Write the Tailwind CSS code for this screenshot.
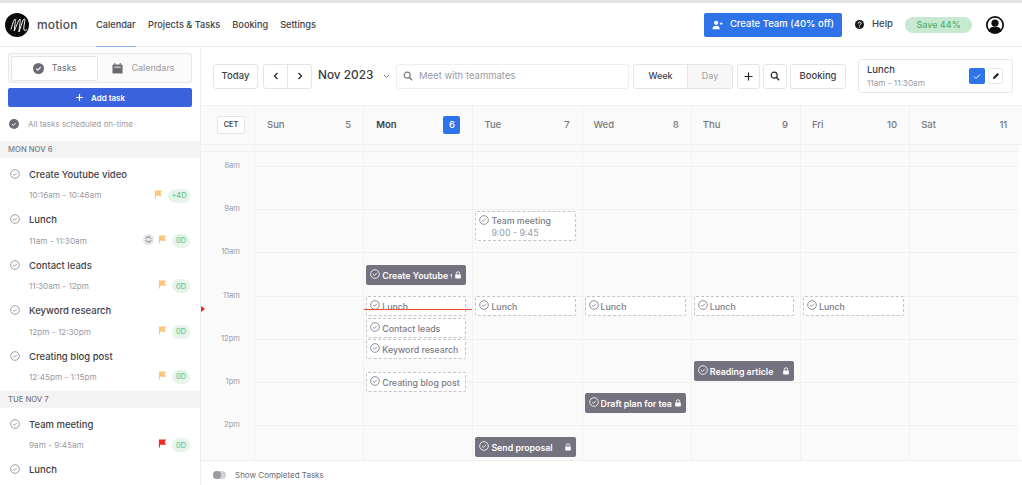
<!DOCTYPE html>
<html lang="en">
<head>
  <meta charset="UTF-8" />
  <title>Motion Calendar</title>
  <script src="https://cdn.jsdelivr.net/npm/@tailwindcss/browser@4"></script>
</head>
<body class="bg-white font-['Inter',sans-serif] text-[#374151] overflow-hidden">
  <svg class="hidden">
    <symbol id="check" viewBox="0 0 12 12"><circle cx="6" cy="6" r="5.2" fill="none" stroke="currentColor" stroke-width="1"/><path d="M3.7 6.2l1.6 1.5 3-3.2" fill="none" stroke="currentColor" stroke-width="1"/></symbol>
    <symbol id="flag" viewBox="0 0 10 10"><path d="M1 0.5h8l-1.6 3 1.6 3H2.2V9.5H1z" fill="currentColor"/></symbol>
    <symbol id="lock" viewBox="0 0 10 10"><path d="M2.8 4.5V3.2a2.2 2.2 0 0 1 4.4 0v1.3" fill="none" stroke="currentColor" stroke-width="1.2"/><rect x="1.5" y="4.3" width="7" height="5" rx="1" fill="currentColor"/></symbol>
    <symbol id="search" viewBox="0 0 12 12"><circle cx="5" cy="5" r="3.6" fill="none" stroke="currentColor" stroke-width="1.4"/><path d="M7.8 7.8l3.2 3.2" stroke="currentColor" stroke-width="1.6"/></symbol>
  </svg>

  <div class="h-[485px] flex flex-col border-t-[3px] border-[#e5e5e5]">
    <!-- top nav -->
    <header class="h-[44px] shrink-0 flex items-center border-b border-[#eeeeee] pl-[5px] pr-[18px]">
      <svg class="w-[24px] h-[24px] shrink-0" viewBox="0 0 24 24"><circle cx="12" cy="12" r="12" fill="#0b0b0b"/><path d="M6 16C7.5 12 8.500 7 10 6c1-.3-.5 8-.8 12 2-4 4-11 5.800-12 1-.3-1 9-1 13 1.500-4 3-10 4.500-12.500 1-1 1.500-1 1.300 1-.2 3-1.500 7-.8 9.500.5 1 2 .5 2.800-.5" fill="none" stroke="#fff" stroke-width="1" stroke-linecap="round"/></svg>
      <span class="ml-[8px] w-[42px] text-[12px] font-medium tracking-[0.2px] text-[#4b4b50]">motion</span>
      <nav class="ml-[17px] flex h-full items-center gap-[12px] text-[9.2px] font-medium text-[#3f3f46] whitespace-nowrap">
        <a class="relative h-full flex items-center text-[#374151] w-[40px]">Calendar<span class="absolute left-0 right-0 bottom-[-1px] h-[1px] bg-[#8fb2ee]"></span></a>
        <a>Projects &amp; Tasks</a>
        <a>Booking</a>
        <a>Settings</a>
      </nav>
      <button class="ml-auto w-[138px] h-[24px] rounded-[2px] bg-[#2f73e8] text-white text-[9.5px] font-medium flex items-center justify-center gap-[7px] whitespace-nowrap">
        <svg class="w-[11px] h-[10px]" viewBox="0 0 12 10"><circle cx="4.500" cy="2.600" r="2.300" fill="#fff"/><path d="M0.500 9.500c0-2.500 1.800-3.700 4-3.700s4 1.200 4 3.700z" fill="#fff"/><path d="M10 2v3M8.500 3.500h3" stroke="#fff"/></svg>
        Create Team (40% off)
      </button>
      <svg class="ml-[13px] w-[9px] h-[9px]" viewBox="0 0 10 10"><circle cx="5" cy="5" r="5" fill="#17171a"/><path d="M3.400 3.900a1.700 1.500 0 1 1 2.500 1.300c-.6.300-.9.600-.9 1.100" fill="none" stroke="#fff" stroke-width="1.100"/><circle cx="5" cy="7.900" r=".7" fill="#fff"/></svg>
      <span class="ml-[8px] w-[22px] text-[9.5px] font-medium text-[#3f3f46]">Help</span>
      <span class="ml-[11px] w-[67px] h-[16px] rounded-full bg-[#c6e9cf] text-[#4fb073] text-[9px] font-medium flex items-center justify-center">Save 44%</span>
      <svg class="ml-[14px] w-[18px] h-[18px]" viewBox="0 0 18 18"><circle cx="9" cy="9" r="9" fill="#0b0b0b"/><circle cx="9" cy="9" r="7.300" fill="#fff"/><circle cx="9" cy="7" r="3.600" fill="#0b0b0b"/><path d="M3 14c1-2.800 3.200-3.600 6-3.600s5 .8 6 3.600c-1.500 1.800-3.700 2.800-6 2.800s-4.500-1-6-2.800z" fill="#0b0b0b"/></svg>
    </header>

    <div class="flex-1 flex min-h-0">
      <!-- sidebar -->
      <aside class="w-[201px] shrink-0 border-r border-[#eeeeee] overflow-hidden">
        <div class="px-[8px] pt-[6px]">
          <div class="h-[30px] border border-[#e8e8e8] rounded-[2px] bg-[#fafafa] flex items-center px-[2px] text-[9px]">
            <div class="w-[87px] h-[25px] rounded-[2px] border border-[#e5e5e5] bg-white flex items-center justify-center gap-[8px] text-[#6b6b76]">
              <svg class="w-[11px] h-[11px]" viewBox="0 0 12 12"><circle cx="6" cy="6" r="6" fill="#6b6b76"/><path d="M3.500 6.200l1.700 1.600 3.200-3.300" fill="none" stroke="#fff" stroke-width="1.200"/></svg>
              Tasks
            </div>
            <div class="flex-1 flex items-center justify-center gap-[8px] text-[#9a9aa3]">
              <svg class="w-[11px] h-[11px]" viewBox="0 0 12 12"><path d="M1.500 1.500h9a1 1 0 0 1 1 1v8a1 1 0 0 1-1 1h-9a1 1 0 0 1-1-1v-8a1 1 0 0 1 1-1z" fill="#6b6b76"/><path d="M3 0v2M9 0v2" stroke="#6b6b76" stroke-width="1.200"/><path d="M2.500 4.500h7" stroke="#fff"/></svg>
              Calendars
            </div>
          </div>
          <button class="mt-[5px] w-full h-[19px] rounded-[2px] bg-[#3b62dd] text-white text-[8px] font-semibold flex items-center justify-center gap-[7px]">
            <svg class="w-[9px] h-[9px]" viewBox="0 0 9 9"><path d="M4.500 1v7M1 4.500h7" stroke="#fff" stroke-width="1.200"/></svg>
            Add task
          </button>
          <div class="mt-[10px] h-[14px] flex items-center gap-[9px] pl-[1px] text-[8px] text-[#9a9aa3]">
            <svg class="w-[10px] h-[10px]" viewBox="0 0 12 12"><circle cx="6" cy="6" r="6" fill="#6b6b76"/><path d="M3.500 6.200l1.700 1.600 3.200-3.300" fill="none" stroke="#fff" stroke-width="1.200"/></svg>
            All tasks scheduled on-time
          </div>
        </div>

        <div class="mt-[10px] h-[17px] bg-[#f3f3f4] pl-[8px] flex items-center text-[7.7px] font-medium text-[#7b7b85]">MON NOV 6</div>
        <div class="pb-[6px]">
          <div class="h-[45.4px] flex pl-[10px] pr-[10px] pt-[10px]">
            <svg class="w-[10px] h-[10px] mt-[1px] text-[#8c8c96] shrink-0"><use href="#check"/></svg>
            <div class="ml-[9px] flex-1">
              <div class="text-[9.5px] font-medium leading-[13px] text-[#3f3f46]">Create Youtube video</div>
              <div class="mt-[8px] flex items-center text-[8.2px] text-[#9a9aa3] h-[13px]">10:16am - 10:46am<svg class="ml-auto w-[9px] h-[9px] -mt-[3px] text-[#fcc77a]"><use href="#flag"/></svg><span class="ml-[5px] w-[22px] h-[14px] rounded-full bg-[#e6f5ea] text-[#5dbb80] text-[7.5px] flex items-center justify-center">+4D</span></div>
            </div>
          </div>
          <div class="h-[45.4px] flex pl-[10px] pr-[10px] pt-[10px]">
            <svg class="w-[10px] h-[10px] mt-[1px] text-[#8c8c96] shrink-0"><use href="#check"/></svg>
            <div class="ml-[9px] flex-1">
              <div class="text-[9.5px] font-medium leading-[13px] text-[#3f3f46]">Lunch</div>
              <div class="mt-[8px] flex items-center text-[8.2px] text-[#9a9aa3] h-[13px]">11am - 11:30am<span class="ml-auto w-[11px] h-[11px] -mt-[3px] rounded-full bg-[#e5e5e8] flex items-center justify-center"><svg class="w-[7px] h-[7px]" viewBox="0 0 8 8"><path d="M1 3a3 3 0 0 1 5-1l1 1M7 5a3 3 0 0 1-5 1L1 5" fill="none" stroke="#66666f"/></svg></span><svg class="ml-[4px] w-[9px] h-[9px] -mt-[3px] text-[#fcc77a]"><use href="#flag"/></svg><span class="ml-[5px] w-[18px] h-[14px] rounded-full bg-[#e6f5ea] text-[#5dbb80] text-[7.5px] flex items-center justify-center">0D</span></div>
            </div>
          </div>
          <div class="h-[45.4px] flex pl-[10px] pr-[10px] pt-[10px]">
            <svg class="w-[10px] h-[10px] mt-[1px] text-[#8c8c96] shrink-0"><use href="#check"/></svg>
            <div class="ml-[9px] flex-1">
              <div class="text-[9.5px] font-medium leading-[13px] text-[#3f3f46]">Contact leads</div>
              <div class="mt-[8px] flex items-center text-[8.2px] text-[#9a9aa3] h-[13px]">11:30am - 12pm<svg class="ml-auto w-[9px] h-[9px] -mt-[3px] text-[#fcc77a]"><use href="#flag"/></svg><span class="ml-[5px] w-[18px] h-[14px] rounded-full bg-[#e6f5ea] text-[#5dbb80] text-[7.5px] flex items-center justify-center">0D</span></div>
            </div>
          </div>
          <div class="h-[45.4px] flex pl-[10px] pr-[10px] pt-[10px]">
            <svg class="w-[10px] h-[10px] mt-[1px] text-[#8c8c96] shrink-0"><use href="#check"/></svg>
            <div class="ml-[9px] flex-1">
              <div class="text-[9.5px] font-medium leading-[13px] text-[#3f3f46]">Keyword research</div>
              <div class="mt-[8px] flex items-center text-[8.2px] text-[#9a9aa3] h-[13px]">12pm - 12:30pm<svg class="ml-auto w-[9px] h-[9px] -mt-[3px] text-[#fcc77a]"><use href="#flag"/></svg><span class="ml-[5px] w-[18px] h-[14px] rounded-full bg-[#e6f5ea] text-[#5dbb80] text-[7.5px] flex items-center justify-center">0D</span></div>
            </div>
          </div>
          <div class="h-[45.4px] flex pl-[10px] pr-[10px] pt-[10px]">
            <svg class="w-[10px] h-[10px] mt-[1px] text-[#8c8c96] shrink-0"><use href="#check"/></svg>
            <div class="ml-[9px] flex-1">
              <div class="text-[9.5px] font-medium leading-[13px] text-[#3f3f46]">Creating blog post</div>
              <div class="mt-[8px] flex items-center text-[8.2px] text-[#9a9aa3] h-[13px]">12:45pm - 1:15pm<svg class="ml-auto w-[9px] h-[9px] -mt-[3px] text-[#fcc77a]"><use href="#flag"/></svg><span class="ml-[5px] w-[18px] h-[14px] rounded-full bg-[#e6f5ea] text-[#5dbb80] text-[7.5px] flex items-center justify-center">0D</span></div>
            </div>
          </div>
        </div>
        <div class="h-[17px] bg-[#f3f3f4] pl-[8px] flex items-center text-[7.7px] font-medium text-[#7b7b85]">TUE NOV 7</div>
        <div>
          <div class="h-[45.4px] flex pl-[10px] pr-[10px] pt-[10px]">
            <svg class="w-[10px] h-[10px] mt-[1px] text-[#8c8c96] shrink-0"><use href="#check"/></svg>
            <div class="ml-[9px] flex-1">
              <div class="text-[9.5px] font-medium leading-[13px] text-[#3f3f46]">Team meeting</div>
              <div class="mt-[8px] flex items-center text-[8.2px] text-[#9a9aa3] h-[13px]">9am - 9:45am<svg class="ml-auto w-[9px] h-[9px] -mt-[3px] text-[#ee2b1c]"><use href="#flag"/></svg><span class="ml-[5px] w-[18px] h-[14px] rounded-full bg-[#e6f5ea] text-[#5dbb80] text-[7.5px] flex items-center justify-center">0D</span></div>
            </div>
          </div>
          <div class="h-[45.4px] flex pl-[10px] pr-[10px] pt-[10px]">
            <svg class="w-[10px] h-[10px] mt-[1px] text-[#8c8c96] shrink-0"><use href="#check"/></svg>
            <div class="ml-[9px] flex-1">
              <div class="text-[9.5px] font-medium leading-[13px] text-[#3f3f46]">Lunch</div>
            </div>
          </div>
        </div>
      </aside>

      <!-- main -->
      <main class="flex-1 min-w-0 flex flex-col">
        <div class="h-[58px] shrink-0 flex items-center pl-[12px] text-[9.5px] font-medium text-[#3f3f46]">
          <button class="w-[45px] h-[25px] border border-[#e5e5e5] rounded-[3px] font-medium">Today</button>
          <div class="ml-[5px] w-[49px] h-[25px] border border-[#e5e5e5] rounded-[3px] flex divide-x divide-[#e5e5e5]">
            <span class="flex-1 flex items-center justify-center"><svg class="w-[6px] h-[8px]" viewBox="0 0 6 8"><path d="M4.500 1L1.500 4l3 3" fill="none" stroke="#27272a" stroke-width="1.300"/></svg></span>
            <span class="flex-1 flex items-center justify-center"><svg class="w-[6px] h-[8px]" viewBox="0 0 6 8"><path d="M1.500 1l3 3-3 3" fill="none" stroke="#27272a" stroke-width="1.300"/></svg></span>
          </div>
          <span class="ml-[6px] w-[65px] text-[11.8px] font-medium text-[#3a3a40] whitespace-nowrap">Nov 2023</span>
          <svg class="w-[7px] h-[5px]" viewBox="0 0 7 5"><path d="M1 1l2.500 2.500L6 1" fill="none" stroke="#77777f"/></svg>
          <div class="ml-[6px] w-[233px] h-[25px] border border-[#eeeeee] rounded-[3px] flex items-center pl-[6px] gap-[6px] text-[9.5px] font-normal text-[#9a9aa3]">
            <svg class="w-[10px] h-[10px] text-[#77777f]"><use href="#search"/></svg>
            Meet with teammates
          </div>
          <div class="ml-[4px] w-[100px] h-[25px] border border-[#e5e5e5] rounded-[3px] flex text-[9px]">
            <span class="w-[54px] flex items-center justify-center border-r border-[#e5e5e5]">Week</span>
            <span class="flex-1 flex items-center justify-center bg-[#f7f7f7] text-[#a0a0a8] font-normal">Day</span>
          </div>
          <button class="ml-[4px] w-[23px] h-[25px] border border-[#e5e5e5] rounded-[3px] flex items-center justify-center"><svg class="w-[9px] h-[9px]" viewBox="0 0 9 9"><path d="M4.500 0.500v8M0.500 4.500h8" stroke="#27272a" stroke-width="1.200"/></svg></button>
          <button class="ml-[3px] w-[24px] h-[25px] border border-[#e5e5e5] rounded-[3px] flex items-center justify-center"><svg class="w-[10px] h-[10px] text-[#27272a]"><use href="#search"/></svg></button>
          <button class="ml-[3px] w-[56px] h-[25px] border border-[#e5e5e5] rounded-[3px] font-medium">Booking</button>
          <div class="ml-[12px] w-[155px] h-[34px] border border-[#e8e8e8] rounded-[3px] flex items-center pl-[8px] pr-[9px]">
            <div class="flex flex-col gap-[2px]">
              <span class="text-[9.5px] leading-[13px]">Lunch</span>
              <span class="text-[8.2px] leading-[11px] font-normal text-[#9a9aa3]">11am - 11:30am</span>
            </div>
            <span class="ml-auto w-[16px] h-[16px] rounded-[2px] bg-[#2f73e8] flex items-center justify-center"><svg class="w-[8px] h-[7px]" viewBox="0 0 8 7"><path d="M1 3.500l2 2 4-4" fill="none" stroke="#fff" stroke-width="1"/></svg></span>
            <span class="ml-[3px] w-[15px] h-[16px] rounded-[2px] border border-[#e8e8e8] flex items-center justify-center"><svg class="w-[8px] h-[8px]" viewBox="0 0 8 8"><path d="M1 7l.5-2L5.500 1l1.500 1.500L3 6.500z" fill="#17171a"/></svg></span>
          </div>
        </div>

        <!-- week head -->
        <div class="h-[40px] shrink-0 grid grid-cols-[54px_repeat(7,109.2px)_1fr] bg-[#fafafa] border-t border-b border-[#f0f0f0] text-[9.5px] text-[#77777f] font-medium">
          <div class="border-r border-[#f1f1f1] pl-[16px] flex items-center"><span class="w-[28px] h-[18px] border border-[#e5e5e5] rounded-[2px] bg-white flex items-center justify-center text-[7.2px] font-semibold text-[#3f3f46]">CET</span></div>
          <div class="border-r border-[#f1f1f1] flex items-center justify-between pl-[12px] pr-[12px]"><span>Sun</span><span>5</span></div>
          <div class="border-r border-[#f1f1f1] flex items-center justify-between pl-[12px] pr-[12px]"><span class="font-semibold text-[#3f3f46]">Mon</span><span class="w-[17px] h-[18px] rounded-[2px] bg-[#2f73e8] text-white flex items-center justify-center">6</span></div>
          <div class="border-r border-[#f1f1f1] flex items-center justify-between pl-[11px] pr-[12px]"><span>Tue</span><span>7</span></div>
          <div class="border-r border-[#f1f1f1] flex items-center justify-between pl-[11px] pr-[12px]"><span>Wed</span><span>8</span></div>
          <div class="border-r border-[#f1f1f1] flex items-center justify-between pl-[11px] pr-[12px]"><span>Thu</span><span>9</span></div>
          <div class="border-r border-[#f1f1f1] flex items-center justify-between pl-[11px] pr-[12px]"><span>Fri</span><span>10</span></div>
          <div class="flex items-center justify-between pl-[11px] pr-[12px]"><span>Sat</span><span>11</span></div>
        </div>

        <!-- calendar body -->
        <div class="relative flex-1 min-h-0 overflow-hidden bg-[#fafafa] mr-[3px] text-[7.6px] text-[#9a9aa3]">
          <div class="h-[7px] border-b border-[#f1f1f1]"></div>
          <div class="h-[15px] border-b border-[#f1f1f1] ml-[54px]"></div>
          <div class="flex h-[43.2px]"><span class="w-[54px] pr-[15px] text-right -mt-[8px] h-[14px] leading-[14px]">8am</span><div class="flex-1 border-b border-[#f1f1f1]"></div></div>
          <div class="flex h-[43.2px]"><span class="w-[54px] pr-[15px] text-right -mt-[8px] h-[14px] leading-[14px]">9am</span><div class="flex-1 border-b border-[#f1f1f1]"></div></div>
          <div class="flex h-[43.2px]"><span class="w-[54px] pr-[15px] text-right -mt-[8px] h-[14px] leading-[14px]">10am</span><div class="flex-1 border-b border-[#f1f1f1]"></div></div>
          <div class="flex h-[43.2px]"><span class="w-[54px] pr-[15px] text-right -mt-[8px] h-[14px] leading-[14px]">11am</span><div class="flex-1 border-b border-[#f1f1f1]"></div></div>
          <div class="flex h-[43.2px]"><span class="w-[54px] pr-[15px] text-right -mt-[8px] h-[14px] leading-[14px]">12pm</span><div class="flex-1 border-b border-[#f1f1f1]"></div></div>
          <div class="flex h-[43.2px]"><span class="w-[54px] pr-[15px] text-right -mt-[8px] h-[14px] leading-[14px]">1pm</span><div class="flex-1 border-b border-[#f1f1f1]"></div></div>
          <div class="flex h-[43.2px]"><span class="w-[54px] pr-[15px] text-right -mt-[8px] h-[14px] leading-[14px]">2pm</span><div class="flex-1"></div></div>

          <!-- now marker in the gutter -->
          <span class="absolute left-0 top-[161px] w-0 h-0 border-y-[3px] border-y-transparent border-l-[4px] border-l-[#e8281c]"></span>

          <!-- day columns, events sit over the hour lines -->
          <div class="absolute inset-0 grid grid-cols-[54px_repeat(7,109.2px)] text-[8.8px] font-medium leading-[12px]">
            <div class="border-r border-[#f1f1f1]"></div>
            <div class="border-r border-[#f1f1f1]"></div>
            <div class="relative border-r border-[#f1f1f1]">
              <div class="absolute left-[2px] top-[120px] w-[100px] h-[20px] rounded-[2px] bg-[#74727f] text-white font-semibold flex items-center pl-[4px] pr-[4px] gap-[2px]"><svg class="w-[10px] h-[10px] shrink-0 -mt-[2px]"><use href="#check"/></svg><span class="w-[71px] overflow-hidden whitespace-nowrap mt-[1px]">Create Youtube video</span><svg class="ml-auto w-[8px] h-[8px] shrink-0"><use href="#lock"/></svg></div>
              <div class="absolute left-[2px] top-[151px] w-[100px] h-[20px] rounded-[2px] bg-white border border-dashed border-[#c4c4ca] text-[#7b7b85] flex items-center pl-[3px] gap-[2px] whitespace-nowrap"><svg class="w-[10px] h-[10px] shrink-0 -mt-[2px]"><use href="#check"/></svg><span class="mt-[1px]">Lunch</span></div>
              <div class="absolute left-[2px] top-[173px] w-[100px] h-[20px] rounded-[2px] bg-white border border-dashed border-[#c4c4ca] text-[#7b7b85] flex items-center pl-[3px] gap-[2px] whitespace-nowrap"><svg class="w-[10px] h-[10px] shrink-0 -mt-[2px]"><use href="#check"/></svg><span class="mt-[1px]">Contact leads</span></div>
              <div class="absolute left-[2px] top-[194px] w-[100px] h-[20px] rounded-[2px] bg-white border border-dashed border-[#c4c4ca] text-[#7b7b85] flex items-center pl-[3px] gap-[2px] whitespace-nowrap"><svg class="w-[10px] h-[10px] shrink-0 -mt-[2px]"><use href="#check"/></svg><span class="mt-[1px]">Keyword research</span></div>
              <div class="absolute left-[2px] top-[227px] w-[100px] h-[20px] rounded-[2px] bg-white border border-dashed border-[#c4c4ca] text-[#7b7b85] flex items-center pl-[3px] gap-[2px] whitespace-nowrap"><svg class="w-[10px] h-[10px] shrink-0 -mt-[2px]"><use href="#check"/></svg><span class="mt-[1px]">Creating blog post</span></div>
              <div class="absolute left-0 right-0 top-[164px] h-[1px] bg-[#ef4a32]"></div>
            </div>
            <div class="relative border-r border-[#f1f1f1]">
              <div class="absolute left-[2px] top-[66px] w-[101px] h-[30px] rounded-[2px] bg-white border border-dashed border-[#c4c4ca] text-[#7b7b85] pl-[3px] pt-[2px] whitespace-nowrap">
                <div class="flex items-center gap-[2px] leading-[13px]"><svg class="w-[10px] h-[10px] shrink-0 -mt-[2px]"><use href="#check"/></svg><span>Team meeting</span></div>
                <div class="pl-[12px] leading-[12px] font-normal text-[#9a9aa3]">9:00 - 9:45</div>
              </div>
              <div class="absolute left-[2px] top-[151px] w-[101px] h-[20px] rounded-[2px] bg-white border border-dashed border-[#c4c4ca] text-[#7b7b85] flex items-center pl-[3px] gap-[2px] whitespace-nowrap"><svg class="w-[10px] h-[10px] shrink-0 -mt-[2px]"><use href="#check"/></svg><span class="mt-[1px]">Lunch</span></div>
              <div class="absolute left-[2px] top-[292px] w-[101px] h-[20px] rounded-[2px] bg-[#74727f] text-white font-semibold flex items-center pl-[4px] pr-[4px] gap-[2px]"><svg class="w-[10px] h-[10px] shrink-0 -mt-[2px]"><use href="#check"/></svg><span class="flex-1 whitespace-nowrap mt-[1px]">Send proposal</span><svg class="w-[8px] h-[8px] shrink-0"><use href="#lock"/></svg></div>
            </div>
            <div class="relative border-r border-[#f1f1f1]">
              <div class="absolute left-[2px] top-[151px] w-[101px] h-[20px] rounded-[2px] bg-white border border-dashed border-[#c4c4ca] text-[#7b7b85] flex items-center pl-[3px] gap-[2px] whitespace-nowrap"><svg class="w-[10px] h-[10px] shrink-0 -mt-[2px]"><use href="#check"/></svg><span class="mt-[1px]">Lunch</span></div>
              <div class="absolute left-[2px] top-[248px] w-[101px] h-[20px] rounded-[2px] bg-[#74727f] text-white font-semibold flex items-center pl-[4px] pr-[4px] gap-[2px]"><svg class="w-[10px] h-[10px] shrink-0 -mt-[2px]"><use href="#check"/></svg><span class="w-[71px] overflow-hidden whitespace-nowrap mt-[1px]">Draft plan for team</span><svg class="ml-auto w-[8px] h-[8px] shrink-0"><use href="#lock"/></svg></div>
            </div>
            <div class="relative border-r border-[#f1f1f1]">
              <div class="absolute left-[2px] top-[151px] w-[100px] h-[20px] rounded-[2px] bg-white border border-dashed border-[#c4c4ca] text-[#7b7b85] flex items-center pl-[3px] gap-[2px] whitespace-nowrap"><svg class="w-[10px] h-[10px] shrink-0 -mt-[2px]"><use href="#check"/></svg><span class="mt-[1px]">Lunch</span></div>
              <div class="absolute left-[2px] top-[216px] w-[100px] h-[20px] rounded-[2px] bg-[#74727f] text-white font-semibold flex items-center pl-[4px] pr-[4px] gap-[2px]"><svg class="w-[10px] h-[10px] shrink-0 -mt-[2px]"><use href="#check"/></svg><span class="flex-1 whitespace-nowrap mt-[1px]">Reading article</span><svg class="w-[8px] h-[8px] shrink-0"><use href="#lock"/></svg></div>
            </div>
            <div class="relative border-r border-[#f1f1f1]">
              <div class="absolute left-[2px] top-[151px] w-[101px] h-[20px] rounded-[2px] bg-white border border-dashed border-[#c4c4ca] text-[#7b7b85] flex items-center pl-[3px] gap-[2px] whitespace-nowrap"><svg class="w-[10px] h-[10px] shrink-0 -mt-[2px]"><use href="#check"/></svg><span class="mt-[1px]">Lunch</span></div>
            </div>
            <div></div>
          </div>
        </div>

        <!-- footer -->
        <div class="h-[25px] shrink-0 border-t border-[#eeeeee] flex items-center pl-[12px] pt-[3px] gap-[9px] text-[8px] text-[#6b6b76]">
          <span class="relative w-[13px] h-[8px] rounded-full bg-[#d1d1d6]"><span class="absolute left-0 top-0 w-[8px] h-[8px] rounded-full bg-[#9a9aa3]"></span></span>
          Show Completed Tasks
        </div>
      </main>
    </div>
  </div>
</body>
</html>
